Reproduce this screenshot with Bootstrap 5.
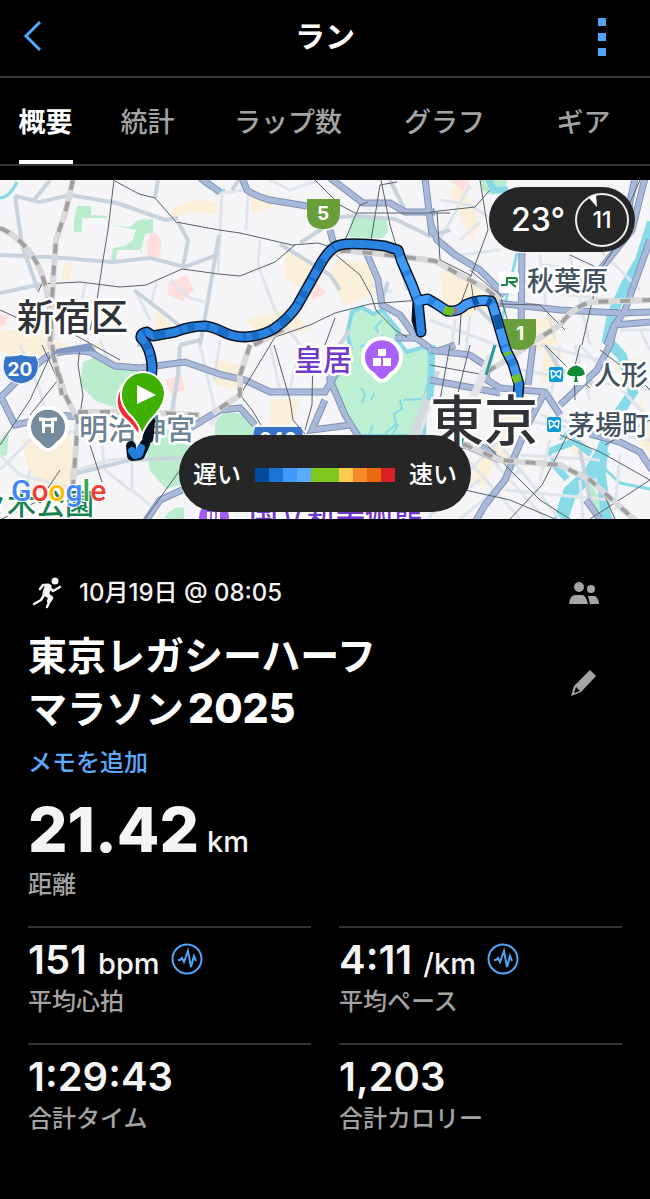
<!DOCTYPE html>
<html lang="ja" data-bs-theme="dark">
<head>
<meta charset="utf-8">
<meta name="viewport" content="width=device-width, initial-scale=1">
<title>ラン</title>
<link rel="stylesheet" href="https://cdn.jsdelivr.net/npm/bootstrap@5.3.0/dist/css/bootstrap.min.css">
<script src="https://cdn.jsdelivr.net/npm/bootstrap@5.3.0/dist/js/bootstrap.bundle.min.js"></script>
<style>
  body { background: #000; color: #f4f4f4; font-family: Inter, "Noto Sans CJK JP", sans-serif; font-size: 24px; line-height: 32px; }
  svg { display: block; }
  .topbar { height: 78px; padding: 0 24px 4px 16px; border-bottom: 2px solid #3a3a3a; }
  .topbar h1 { font-size: 30px; line-height: 40px; font-weight: 700; padding-left: 8px; }
  .icon-btn { width: 48px; height: 48px; padding: 0; border: 0; background: none; display: flex; align-items: center; }
  .side-btn { width: 76px; }
  .tabs { display: grid; grid-template-columns: 91fr 113fr 168fr 145fr 133fr; height: 88px; border-bottom: 2px solid #333; margin-bottom: 14px; }
  .tabs a { display: flex; align-items: center; height: 86px; font-size: 27px; font-weight: 500; color: #a3a3a3; text-decoration: none; border-bottom: 4px solid transparent; padding-top: 8px; margin: 0 auto; white-space: nowrap; }
  .tabs a.active { color: #fff; font-weight: 700; border-color: #fff; }
  .map-pill { position: absolute; background: #262626; color: #fff; display: flex; align-items: center; font-weight: 500; white-space: nowrap; }
  .weather { top: 7px; right: 15px; height: 65px; border-radius: 33px; padding: 0 5px 0 22px; gap: 9px; font-size: 32px; }
  .legend-pill { bottom: 7px; left: 50%; transform: translateX(-50%); height: 77px; border-radius: 39px; padding: 2px 14px 0; gap: 14px; }
  .scale { display: flex; }
  .scale i { width: 14px; height: 14px; }
  .summary { padding: 54px 28px 0; }
  .date-row { font-weight: 500; height: 40px; }
  .title-row { margin-top: 17px; }
  .title-row h2 { font-size: 39px; line-height: 52px; font-weight: 700; }
  .title-row .year { font-weight: 800; margin-left: 4px; font-size: 41px; }
  .memo { color: #5aa9fa; text-decoration: none; font-weight: 500; margin-top: 12px; }
  .main-value { font-size: 62px; line-height: 54px; font-weight: 800; margin-top: 24px; }
  .unit { font-size: 29px; font-weight: 500; }
  .caption { color: #a3a3a3; font-weight: 500; }
  .stats { display: grid; grid-template-columns: 1fr 1fr; column-gap: 28px; margin-top: 25px; }
  .stat { border-top: 2px solid #333; height: 117px; padding-top: 10px; }
  .stat-value { font-size: 40px; line-height: 44px; height: 48px; font-weight: 600; }
  .stat-value .unit { margin-left: 11px; }
  .stat-value .trend { margin: 0 0 6px 11px; }
  /* map */
  .map-svg { width: 100%; height: auto; background: #f5f5f7; }
  .minor path, .mid path, .line path { fill: none; }
  .minor path { stroke: #dfe5ea; stroke-width: 3; }
  .mid path { stroke: #c8d3dd; stroke-width: 4; }
  .major .edge { stroke: #8292b4; stroke-width: 7; }
  .major .core { stroke: #a9b9da; stroke-width: 5; }
  .line path { stroke: #59626a; stroke-width: 1; }
  .rail .edge { stroke: #d9d9d9; stroke-width: 6; }
  .rail .core { stroke: #a0a0a0; stroke-width: 4; stroke-dasharray: 10 12; }
  .built { fill: #faf0da; }
  .park { fill: #b9edce; }
  .hospital { fill: #ffdede; }
  .river { fill: none; stroke: #87dbe9; }
  .place { font-family: "Noto Sans CJK JP", sans-serif; font-weight: 500; stroke: #fff; stroke-width: 5px; stroke-linejoin: round; paint-order: stroke; }
  .station { font-size: 27px; fill: #42525f; }
  .shield { font-family: Inter, sans-serif; font-weight: 700; fill: #fff; text-anchor: middle; }
</style>
</head>
<body>
<header class="topbar d-flex align-items-center justify-content-between">
  <button class="icon-btn" type="button" aria-label="戻る">
    <svg width="32" height="36" viewBox="0 0 32 36" fill="none" stroke="#51a5f8" stroke-width="3"><path d="M24 4 10 18l14 14"/></svg>
  </button>
  <h1 class="m-0">ラン</h1>
  <button class="icon-btn justify-content-center" type="button" aria-label="メニュー">
    <svg width="36" height="40" viewBox="0 0 36 40" fill="#51a5f8"><path d="M14 2h8v8h-8zM14 17h8v8h-8zM14 32h8v8h-8z"/></svg>
  </button>
</header>

<nav class="tabs" aria-label="アクティビティ">
  <a class="active" href="#summary" aria-current="page">概要</a>
  <a href="#stats">統計</a>
  <a href="#laps">ラップ数</a>
  <a href="#graph">グラフ</a>
  <a href="#gear">ギア</a>
</nav>

<section class="position-relative overflow-hidden">
  <svg class="map-svg" viewBox="0 180 650 339" role="img" aria-label="東京のルートマップ">
    <defs>
      <path id="r1" d="M242 178 247 190Q255 196 270 200L307 206M330 178 363 203H390L405 212H435M425 178 432 235M367 254 378 280 382 305 400 315 418 340M330 230 334 245M430 222 437 240 455 255 480 270 505 295M522 253 521 335M470 300 560 310 620 313 650 312M645 178 632 230 600 270 560 290M650 240 625 310 615 325 610 345 597 370 560 405M635 178 622 240M430 350 470 355 485 365 487 380 500 388 545 392 560 415M545 392 530 420 515 455 505 480 485 505 475 522M590 434 620 442 640 452 652 470M430 380 500 393M533 345 528 385M465 445 500 460M0 398 20 378 45 358Q60 348 90 352L115 366 140 368 185 362 222 375 245 380 270 392H325L337 372M0 395 15 425 60 415 88 418M190 428 220 410 240 408 255 425M145 522 160 500 182 490M330 345V380L345 415 358 436M325 400 312 430 350 425M495 455 470 440M607 345 614 325 650 322M200 178 220 192M455 345 435 352M430 348 416 338 395 338M586 500 600 519"/>
      <path id="r2" d="M73 180 66 210 56 240 53 280 50 345 65 395 78 420 75 460 70 522M0 228Q20 236 35 260T52 340M52 345 62 395M78 412 140 412 200 415M254 345 282 330 300 296 328 257Q336 250 350 251L380 254 435 261 460 275 485 288 500 300M525 347 560 325Q575 305 592 302L652 300M463 444 500 460 560 465 590 480 637 522M250 345 240 375V395L213 413M487 372 525 348"/>
    </defs>

    <g class="built">
      <path d="m172 207 25-7 20 2v12l-28-2-18 8zM62 265l10-4-2 20-8-2zM250 198l20-6 2 15-20 6zM335 258l35 5 5 30-30 12-15-25zM245 320l45-12 20 22-45 8zM0 332l20-3 60 20 20-8v8l-45 8L0 352zM22 440l48-8 5 50-25 22q-22-20-28-64zM215 360l25 5v25l-25-5zM270 400l28-2-4 24-24 4zM440 270l30 5 20 30-25 12-22-14zM505 395l22 5-20 60-18-8zM545 345l18 8-12 30-10-2zM450 190l12-8 18 40-8 20zM615 365l22-8 8 25-20 12zM480 450l16 8-12 30-14-6zM158 310l12 15-8 14-8-10zM285 250l40 18-12 30-28-20zM570 425l20 22-10 14-14-18zM535 320l20-4 3 28-22 8zM640 398l10 22v35l-12-14z"/>
    </g>
    <g class="hospital">
      <ellipse cx="154" cy="247" rx="7" ry="14"/><path d="m168 283 18-8 8 14-12 12-14-6zM0 314l7 2v8l-7 4zM300 290l18-6 8 9-12 6zM450 180h20l-6 12zM165 380l16-6 4 16-14 4z"/>
    </g>
    <g class="park">
      <path d="M77 206H91V215L107 216V218H82V232H74V221zM112 225 130 227 138 220 153 219V233L145 234 141 249 144 257 140 250H117L116 262 111 260 113 248 125 246 133 240 136 230zM347 237 353 215 387 218 388 232 382 238z"/>
      <path d="m83 362 12-5 20 9 25 3 6 6-14 12-12 22-24-8-16-16zM146 446l10-16h34v52l-24 7-16-18zM222 414q20-6 32 14v10h-39v-15zM166 515q10-10 18-7v14h-20zM0 440l9-10-2 25-7 2zM588 480l26 39h-20z"/>
      <path d="M480 178h28l-4 14-12 3-10-5z"/>
    </g>
    <path d="M352 312 362 307 373 314 382 310 390 320 399 331 396 339 407 352 427 346 433 366 425 397 424 436H360L340 407 333 384 336 362 351 348 347 334z" fill="#bdf0d3" stroke="#8ad7e8" stroke-width="4"/>
    <path d="m434 370 6 2-22 66h-10z" fill="#d4d9de"/>
    <g class="river">
      <path stroke-width="2" d="m361 388 4 6-3 9M374 394l-3 6M403 345l-8 7 6 3M400 399l2 10-8 5 2 10-14 13M404 400l18-1M398 424l-6 12M373 425l-4 10M382 320l-7 8 8 9-5 8M360 347l8-3"/>
      <path stroke-width="10" d="M652 222 640 260 625 286 612 315 607 340 622 356 633 392 618 414 603 446 601 475 607 522"/>
      <path stroke-width="14" d="M604 450 590 474 570 492 560 522"/>
      <path stroke-width="7" d="M567 479 553 463M488 178 494 190 508 190M432 345 430 400M591 454 575 441 548 452"/>
      <path stroke-width="3" d="M548 452 558 470M606 470 620 483 650 489M215 194 225 190M201 180Q211 192 220 188M517 253 506 300 500 330M560 440 590 410M0 198Q10 197 17 182"/>
    </g>

    <g class="minor">
      <path d="M222 192 218 272M248 192 246 230M260 240 258 265 275 310 285 325 300 345M157 282 150 305M135 290 150 320M170 280 190 298 205 302M246 190 240 182M215 194 243 190M270 180 290 190 320 180M371 285 392 292M440 200 470 205 500 225M440 240 470 185M460 240 480 222M430 230 460 255 500 250M540 255 545 300 555 340M570 255 590 345M600 250 640 290M455 320 450 360M470 315 465 360M430 320 510 350M540 265 600 270M530 290 610 300M430 405 420 434M455 445 520 519M470 435 545 519M500 445 560 519M450 490 500 440M430 515 480 480M460 519 520 470M540 345 600 360M520 370 650 390M560 345 550 400M575 345 590 400M540 415 600 430M520 455 600 460M580 345 650 420M620 455 615 510M580 480 583 519M30 470 22 519M0 470 30 440 80 430M100 430 105 470 130 490M132 462 132 490 150 505M70 472 110 460 140 457M0 455 20 475 80 490M95 345 90 352M200 345 215 410M180 345 172 430M20 345 40 390 50 430M270 345 280 390M300 345 290 390M210 425 230 400M440 460 430 519M640 330 650 350M630 430 650 420M620 330 650 330M550 440 540 480M505 490 610 500M520 420 650 440M220 340 214 380M100 340 110 365M380 330 380 345M85 284 80 310"/>
    </g>
    <g class="mid">
      <path d="M15 196 40 202 70 195 117 203 165 220 178 218M50 180 34 200M0 255 50 257 112 262 150 258 185 267 219 254M15 196 22 245 38 290M0 293 42 284M178 222 188 240 183 267M219 235 208 300 200 345M155 198 158 180M134 290 160 310 185 330M280 244 330 275 340 290M300 243 340 217 355 216 395 219 430 236 450 230M390 180 405 210M382 300 388 282M180 345 178 375 172 410M180 345 200 340M137 345 148 345M70 475 130 460 180 458M240 178 232 190M395 250 408 290M470 300 500 330M545 345 560 370 595 385M580 450 590 500 600 519M350 330 336 350"/>
    </g>
    <g class="major"><use href="#r1" class="edge" fill="none"/><use href="#r1" class="core" fill="none"/></g>
    <g class="line">
      <path d="M114 180 108 230 103 260 97 300 90 330M115 181 139 194 155 198 176 222 219 230 240 233 292 245 318 243 334 248M38 292 42 284 80 282 120 287 146 285 182 269 219 274 240 276 275 262 295 245M315 180 340 205 355 213H450M381 180 390 225 398 252 403 270M345 240 360 205 368 202M397 182 380 185 376 210 371 240M336 255 360 275 371 295 376 310 395 330 407 337M275 337 310 325 335 313 370 304 420 300M335 318 325 345M430 212 475 207 490 190M480 180 488 230 475 265 462 300 459 345M437 212 440 260 470 275 475 310M500 304 540 305 565 330M620 240 600 270 590 310 582 345M0 310 18 318M75 335 120 360M55 345 30 400 0 445M80 345 78 365 83 395 80 415M92 415 90 445 102 482M42 345 58 380 30 415M274 345 290 400 293 420 305 434M313 345 312 405 305 430M275 337 240 395 252 410 261 425M430 365 485 375M545 345 570 370 590 388M580 345 574 370 575 400M430 470 480 437 510 470 540 500 570 519M570 430 542 485 510 519M560 435 600 452 650 480M650 480 590 519M465 490 510 500 555 519M605 445 650 420M470 345 455 405M450 345 440 400M600 350 640 380 650 390M0 520 40 500 60 470M180 470 145 519M470 270 500 295 515 345M430 435 440 450M640 180 618 230M602 270 570 255M600 485 615 519"/>
    </g>
    <g class="rail"><use href="#r2" class="edge" fill="none"/><use href="#r2" class="core" fill="none"/></g>
    <path d="m491 355-38 92" fill="none" stroke="#e2e4e6" stroke-width="8"/><path d="m495 345-9 30m-18 42-8 32" fill="none" stroke="#289b9b" stroke-width="3"/>
    <path d="M52 354 58 349 90 343 96 351 78 352z" fill="#8196c3"/>

    <!-- road numbers and district names -->
    <g fill="#689f3b">
      <path d="M307 199h33v12q0 18-17 18t-16-18zM503 319h33v14q0 17-17 17t-16-17z"/>
    </g>
    <text class="shield" x="323" y="220" font-size="19">5</text>
    <text class="shield" x="520" y="340" font-size="19">1</text>
    <path d="M5 356q15 0 16-2 2 2 15 2 4 6 2 14-3 12-17 14Q5 382 3 368q0-7 2-12z" fill="#3574c9" stroke="#fff" stroke-width="1"/>
    <text class="shield" x="20" y="376" font-size="19">20</text>
    <path d="M255 427h46q3 8 2 18h-50q0-12 2-18z" fill="#3574c9"/>
    <text class="shield" x="278" y="446" font-size="19">246</text>

    <text class="place" x="17" y="331" font-size="37" fill="#303337">新宿区</text>
    <text class="place" x="294" y="371" font-size="29" fill="#7139ca">皇居</text>
    <text class="place" x="79" y="440" font-size="29" fill="#6c8494">明治神宮</text>
    <text class="place station" x="527" y="291">秋葉原</text>
    <text class="place station" x="594" y="385">人形</text>
    <text class="place station" x="568" y="435">茅場町</text>
    <text class="place" x="249" y="524" font-size="29" fill="#7139ca">国立新美術館</text>
    <text class="place" x="94" y="515" font-size="29" fill="#18824f" text-anchor="end">代々木公園</text>

    <!-- landmark markers -->
    <g stroke="#fff" stroke-width="4">
      <path d="M48 450q-4 0-10-7a19 19 0 1 1 20 0q-6 7-10 7z" fill="#748c9c"/>
      <path d="M382 381q-4 0-9-7a19 19 0 1 1 18 0q-5 7-9 7z" fill="#aa61fb"/>
      <circle cx="214" cy="517" r="17" fill="#a35cf3"/>
    </g>
    <path d="M39 417q9 2 18 0v4H39zM42 420h3v13h-3zm9 0h3v13h-3zM42 424h12v3H42z" fill="#fff"/>
    <path d="M378 349h8v7h-8zM373 358h8v8h-8zM383 358h8v8h-8zM207 512h3v8h-3zm5 0h3v8h-3zm5 0h3v8h-3z" fill="#fff"/>
    <rect x="499" y="272" width="20" height="21" rx="3" fill="#fff"/>
    <path d="M507 277v7q0 1-2 1h-4M508 278h7q2 0 2 2t-2 2h-5l6 5" fill="none" stroke="#128440" stroke-width="2"/>
    <g id="metro">
      <rect x="549" y="367" width="14" height="15" rx="2" fill="#0c9bd1"/>
      <path d="M551 371q3-1 5 2 2-3 5-2l-1 7-4-3-4 3z" fill="none" stroke="#fff" stroke-width="1.500"/>
    </g>
    <use href="#metro" x="-2" y="50"/>
    <rect x="565" y="364" width="21" height="21" rx="4" fill="#fff"/>
    <path d="M567 374q1-6 7-8 2-1 4 0 6 2 7 8-4 3-8 2 0 3 1 6h-4q1-3 1-6-5 1-8-2z" fill="#128b36"/>

    <!-- recorded route -->
    <g fill="none" stroke-linejoin="round" stroke-linecap="round">
      <path d="M148 438 150 415 152 365Q150 346 141 338 140 333 147 332L153 336 175 332Q190 326 205 326C222 328 225 337 245 337Q263 336 275 328 289 318 297 306 310 283 320 265 330 247 340 245 352 242 385 246L398 250 402 262 412 285 418 301 421 332 417 320 418 301 428 299Q440 306 447 311 459 312 465 305 478 299 491 301 494 308 500 330L506 350 513 364 519 384 518 396" stroke="#081321" stroke-width="11"/>
      <path d="M131 446 132 456 140 455 145 444" stroke="#081321" stroke-width="10"/>
      <path d="M132 451 135 455 139 454 141 448" stroke="#237fd9" stroke-width="8"/>
      <path d="M152 415V365Q150 346 141 338 140 333 147 332L153 336 175 332Q190 326 205 326C222 328 225 337 245 337Q263 336 275 328 289 318 297 306 310 283 320 265 330 247 340 245 352 242 385 246L398 250 402 262 412 285 418 301 421 332M418 301 428 299Q440 306 447 311 459 312 465 305 478 299 491 301 494 308 500 330L506 350 513 364 519 384 518 396" stroke="#2a82e0" stroke-width="8"/>
      <path d="M152 415V365Q150 346 141 338 140 333 147 332L153 336 175 332Q190 326 205 326C222 328 225 337 245 337Q263 336 275 328 289 318 297 306 310 283 320 265 330 247 340 245" stroke="#1a6bc6" stroke-width="8" stroke-linecap="butt" stroke-dasharray="7 12 3 9 12 15 2 6"/>
      <path d="M400 257 412 285 418 301 428 299Q440 306 447 311 459 312 465 305 478 299 491 301 494 308 500 330L506 350 513 364 519 384" stroke="#429af8" stroke-width="8" stroke-linecap="butt" stroke-dasharray="15 5 22 3 13 7"/>
      <path d="M496 315 500 329M473 302 478 300M487 301 491 303" stroke="#0c56a3" stroke-width="8" stroke-linecap="butt"/>
      <path d="M444 310 453 312M507 352 508 355M515 375 518 382" stroke="#73c51d" stroke-width="8" stroke-linecap="butt"/>
      <path d="M456 308v6" stroke="#f05b2b" stroke-width="2" stroke-linecap="butt"/>
    </g>
    <!-- 東京 lies over the end of the route -->
    <text class="place" x="430" y="441" font-size="54" fill="#303236">東京</text>

    <!-- start and finish pins -->
    <path d="M139 437q-4-10-16-20-10-12-4-26 8-15 25-12z" fill="#f5262f" stroke="#fff" stroke-width="2"/>
    <path d="M142 435q-3-12-14-22-8-10-7-19a22 22 0 0 1 44 0q0 9-9 20-11 11-14 21z" fill="#3fb000" stroke="#fff" stroke-width="2"/>
    <path d="M137 385v19l19-9z" fill="#fff"/>

    <text x="11" y="501" font-family="Roboto, sans-serif" font-size="30" font-weight="500" stroke="#fff" stroke-width="2" paint-order="stroke"><tspan fill="#4285f4">G</tspan><tspan fill="#ea4335">o</tspan><tspan fill="#fbbc05">o</tspan><tspan fill="#4285f4">g</tspan><tspan fill="#34a853">l</tspan><tspan fill="#ea4335">e</tspan></text>
  </svg>

  <div class="map-pill weather">
    <span>23°</span>
    <svg width="56" height="56" viewBox="0 0 56 56" role="img" aria-label="風速 11">
      <circle cx="28" cy="28" r="26" fill="none" stroke="#eee" stroke-width="2"/>
      <path d="m14 5 8-3 1 13z" fill="#fff"/>
      <text x="28" y="36" text-anchor="middle" font-size="23" fill="#fff">11</text>
    </svg>
  </div>

  <div class="map-pill legend-pill">
    <span>遅い</span>
    <span class="scale" aria-hidden="true"><i style="background:#004b9c"></i><i style="background:#1976d5"></i><i style="background:#4099fb"></i><i style="background:#5aaaff"></i><i style="background:#7fc91e"></i><i style="background:#7fc91e"></i><i style="background:#ffca52"></i><i style="background:#fb8a2a"></i><i style="background:#ea6910"></i><i style="background:#d82124"></i></span>
    <span>速い</span>
  </div>
</section>

<main id="summary" class="summary">
  <div class="date-row d-flex align-items-center">
    <svg class="me-3" width="35" height="32" viewBox="0 0 35 32" fill="none" stroke="#f4f4f4" stroke-linecap="round" stroke-linejoin="round" aria-hidden="true">
      <circle cx="27" cy="4" r="3.500" fill="#f4f4f4" stroke="none"/>
      <path d="M20 10 18 16" stroke-width="7"/>
      <path d="M20 8 15 8 12 12M22 11 25 14 32 10" stroke-width="2.500"/>
      <path d="M18 17 23 21 21 24" stroke-width="4.500"/>
      <path d="M22 23 19 30M16 18 13 23 6 27" stroke-width="2.500"/>
    </svg>
    <span>10月19日 @ 08:05</span>
    <button class="icon-btn side-btn ms-auto justify-content-center" type="button" aria-label="共有">
      <svg width="30" height="24" viewBox="0 0 30 24" fill="#a5a5a5"><circle cx="10" cy="6" r="5"/><circle cx="22" cy="8" r="4"/><path d="M0 23q1-9 6-9h7q4 0 6 9zM19 15h6q4 0 5 8h-9z"/></svg>
    </button>
  </div>
  <div class="title-row d-flex align-items-center justify-content-between">
    <h2 class="m-0">東京レガシーハーフ<br>マラソン<span class="year">2025</span></h2>
    <button class="icon-btn side-btn justify-content-center" type="button" aria-label="編集">
      <svg width="26" height="26" viewBox="0 0 26 26"><path d="m19 0 6 6L10 22 0 26l3-10z" fill="#a5a5a5"/><path d="m5 17 4 4-6 2z" fill="#000"/></svg>
    </button>
  </div>
  <a class="memo d-inline-block" href="#memo">メモを追加</a>
  <div class="main-value d-flex align-items-baseline gap-2"><span>21.42</span><span class="unit">km</span></div>
  <div class="caption">距離</div>

  <div class="stats" id="stats">
    <div class="stat">
      <div class="stat-value d-flex align-items-baseline"><span>151</span><span class="unit">bpm</span>
        <svg class="trend align-self-center" width="32" height="32" viewBox="0 0 32 32" fill="none" stroke="#51a5f8" stroke-width="2"><circle cx="16" cy="16" r="14.500"/><path d="M7 17h2l2-2 2 4 4-11 3 16 3-11 2 5"/></svg>
      </div>
      <div class="caption">平均心拍</div>
    </div>
    <div class="stat">
      <div class="stat-value d-flex align-items-baseline"><span>4:11</span><span class="unit">/km</span>
        <svg class="trend align-self-center" width="32" height="32" viewBox="0 0 32 32" fill="none" stroke="#51a5f8" stroke-width="2"><circle cx="16" cy="16" r="14.500"/><path d="M7 17h2l2-2 2 4 4-11 3 16 3-11 2 5"/></svg>
      </div>
      <div class="caption">平均ペース</div>
    </div>
    <div class="stat">
      <div class="stat-value">1:29:43</div>
      <div class="caption">合計タイム</div>
    </div>
    <div class="stat">
      <div class="stat-value">1,203</div>
      <div class="caption">合計カロリー</div>
    </div>
  </div>
</main>
</body>
</html>
